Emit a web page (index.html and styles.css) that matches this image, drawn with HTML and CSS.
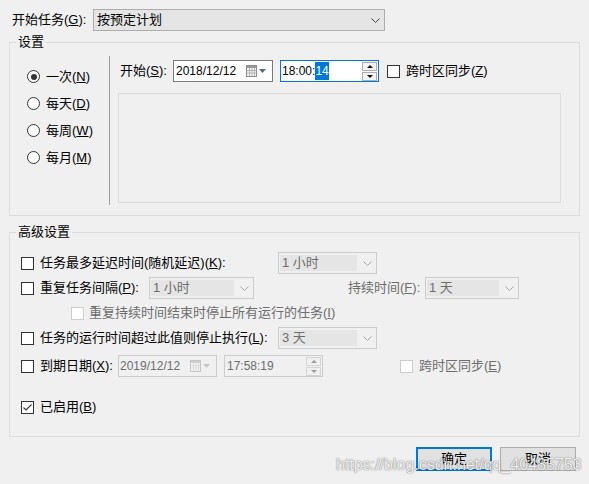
FILE: index.html
```html
<!DOCTYPE html>
<html lang="zh-CN">
<head>
<meta charset="utf-8">
<title>触发器</title>
<link rel="stylesheet" href="styles.css">
</head>
<body>
<div class="dialog">
  <div class="top-row">
    <span class="top-label">开始任务(<u>G</u>):</span>
    <div class="select">
      <span>按预定计划</span>
      <svg class="chev" width="9" height="5" viewBox="0 0 9 5"><polyline points="0.5,0.5 4.5,4.5 8.5,0.5" fill="none" stroke="#444" stroke-width="1"/></svg>
    </div>
  </div>

  <fieldset class="group settings">
    <legend>设置</legend>
    <div class="settings-body">
      <div class="radios">
        <div class="radio-row"><span class="radio checked"><span class="dot"></span></span><span>一次(<u>N</u>)</span></div>
        <div class="radio-row"><span class="radio"></span><span>每天(<u>D</u>)</span></div>
        <div class="radio-row"><span class="radio"></span><span>每周(<u>W</u>)</span></div>
        <div class="radio-row"><span class="radio"></span><span>每月(<u>M</u>)</span></div>
      </div>
      <div class="sep"></div>
      <div class="schedule">
        <div class="start-row">
          <span class="start-label">开始(<u>S</u>):</span>
          <div class="field date">
            <span class="num">2018/12/12</span>
            <svg width="21" height="12" viewBox="0 0 21 12"><rect x="0.5" y="0.5" width="10" height="11" fill="#f4f4f4" stroke="#8c8c8c"/><rect x="1" y="1" width="9" height="2" fill="#9a9a9a"/><path d="M1 5.5h9M1 8h9M3.5 3v8M6 3v8M8.5 3v8" stroke="#b4b4b4" stroke-width="1"/><path d="M13 4h7l-3.5 4z" fill="#50688c"/></svg>
          </div>
          <div class="field time">
            <span class="num">18:00:<span class="sel">14</span></span>
            <span class="spin"><span><i class="up"></i></span><span><i class="down"></i></span></span>
          </div>
          <span class="check start-check"></span>
          <span class="lbl">跨时区同步(<u>Z</u>)</span>
        </div>
        <div class="panel"></div>
      </div>
    </div>
  </fieldset>

  <fieldset class="group advanced">
    <legend>高级设置</legend>
    <div class="adv">
      <div class="adv-row first">
        <span class="check"></span>
        <span class="lbl w238">任务最多延迟时间(随机延迟)(<u>K</u>):</span>
        <div class="combo w99"><span class="val">1 小时</span><svg class="chev" width="9" height="5" viewBox="0 0 9 5"><polyline points="0.5,0.5 4.5,4.5 8.5,0.5" fill="none" stroke="#a6a6a6"/></svg></div>
      </div>
      <div class="adv-row">
        <span class="check"></span>
        <span class="lbl w109">重复任务间隔(<u>P</u>):</span>
        <div class="combo w105"><span class="val">1 小时</span><svg class="chev" width="9" height="5" viewBox="0 0 9 5"><polyline points="0.5,0.5 4.5,4.5 8.5,0.5" fill="none" stroke="#a6a6a6"/></svg></div>
        <span class="dur-label gray">持续时间(<u>F</u>):</span>
        <div class="combo w94"><span class="val">1 天</span><svg class="chev" width="9" height="5" viewBox="0 0 9 5"><polyline points="0.5,0.5 4.5,4.5 8.5,0.5" fill="none" stroke="#a6a6a6"/></svg></div>
      </div>
      <div class="adv-row">
        <span class="check disabled sub-check"></span>
        <span class="gray sub-lbl">重复持续时间结束时停止所有运行的任务(<u>I</u>)</span>
      </div>
      <div class="adv-row">
        <span class="check"></span>
        <span class="lbl w238">任务的运行时间超过此值则停止执行(<u>L</u>):</span>
        <div class="combo w99"><span class="val">3 天</span><svg class="chev" width="9" height="5" viewBox="0 0 9 5"><polyline points="0.5,0.5 4.5,4.5 8.5,0.5" fill="none" stroke="#a6a6a6"/></svg></div>
      </div>
      <div class="adv-row row5">
        <span class="check"></span>
        <span class="lbl w78">到期日期(<u>X</u>):</span>
        <div class="field date off">
          <span class="num">2019/12/12</span>
          <svg width="21" height="12" viewBox="0 0 21 12"><rect x="0.5" y="0.5" width="10" height="11" fill="#f6f6f6" stroke="#c4c4c4"/><rect x="1" y="1" width="9" height="2" fill="#cfcfcf"/><path d="M1 5.5h9M1 8h9M3.5 3v8M6 3v8M8.5 3v8" stroke="#dadada" stroke-width="1"/><path d="M13 4h7l-3.5 4z" fill="#c4c4c4"/></svg>
        </div>
        <div class="field time off">
          <span class="num">17:58:19</span>
          <span class="spin"><span><i class="up"></i></span><span><i class="down"></i></span></span>
        </div>
        <span class="check disabled tz-check"></span>
        <span class="lbl gray">跨时区同步(<u>E</u>)</span>
      </div>
      <div class="adv-row row6">
        <span class="check checked"><svg width="11" height="11" viewBox="0 0 11 11"><polyline points="1.5,5.5 4,8 9.5,2.5" fill="none" stroke="#333" stroke-width="1.1"/></svg></span>
        <span class="lbl">已启用(<u>B</u>)</span>
      </div>
    </div>
  </fieldset>

  <div class="buttons">
    <button class="btn default">确定</button>
    <button class="btn">取消</button>
  </div>

  <div class="watermark">https://blog.csdn.net/qq_40485753</div>
</div>
</body>
</html>
```

FILE: styles.css
```css
* { box-sizing: border-box; }

body {
  margin: 0;
  background: #f0f0f0;
  font-family: "Liberation Sans", "Noto Sans CJK SC", sans-serif;
  font-size: 13px;
  line-height: 16px;
  color: #000;
  white-space: nowrap;
}

.dialog {
  position: relative;
  width: 589px;
  height: 484px;
  overflow: hidden;
}

u { text-decoration: underline; text-underline-offset: 1px; }

.top-row {
  display: flex;
  align-items: center;
  padding: 9px 0 0 12px;
}
.top-label { width: 81px; }
.select {
  width: 292px;
  height: 22px;
  border: 1px solid #adadad;
  background: #e5e5e5;
  display: flex;
  align-items: center;
  justify-content: space-between;
  padding: 0 4px 0 3px;
}

.group {
  margin: 3px 9px 0;
  padding: 0;
  border: 1px solid #dcdcdc;
  min-width: 0;
}
.group legend {
  margin-left: 6px;
  padding: 0 2px;
  line-height: 16px;
}
.advanced { margin-top: 8px; }

.settings-body {
  display: flex;
  padding: 6px 0 10px;
}
.radios {
  width: 99px;
  padding: 7px 0 0 17px;
}
.radio-row {
  display: flex;
  align-items: center;
  height: 27px;
}
.radio {
  width: 13px;
  height: 13px;
  border: 1px solid #333;
  border-radius: 50%;
  background: #fff;
  margin-right: 6px;
  display: flex;
  align-items: center;
  justify-content: center;
}
.radio .dot {
  width: 6px;
  height: 6px;
  border-radius: 50%;
  background: #333;
}
.sep {
  width: 1px;
  height: 149px;
  background: #a0a0a0;
}
.schedule { padding-left: 8px; }
.start-row {
  display: flex;
  align-items: center;
  height: 22px;
  margin-top: 4px;
}
.start-label { width: 53px; margin-left: 2px; flex: none; }

.field {
  height: 22px;
  border: 1px solid #7a7a7a;
  background: #fff;
  display: flex;
  align-items: center;
  flex: none;
}
.num {
  font-family: "Liberation Sans", sans-serif;
  font-size: 12px;
}
.field.date {
  width: 100px;
  padding: 0 5px 0 2px;
  margin-right: 7px;
  justify-content: space-between;
}
.field.time {
  width: 99px;
  border-color: #0078d7;
  padding-left: 1px;
}
.sel {
  display: inline-block;
  background: #0078d7;
  color: #fff;
  line-height: 18px;
  height: 18px;
}
.spin {
  margin-left: auto;
  margin-right: 1px;
  width: 15px;
  height: 19px;
  display: flex;
  flex-direction: column;
  gap: 1px;
}
.spin > span {
  flex: 1;
  border: 1px solid #adadad;
  background: #f3f3f3;
  display: flex;
  align-items: center;
  justify-content: center;
}
.spin i {
  width: 0;
  height: 0;
  border-left: 3px solid transparent;
  border-right: 3px solid transparent;
}
.spin i.up { border-bottom: 3px solid #111; }
.spin i.down { border-top: 3px solid #111; }

.field.off {
  border-color: #cccccc;
  background: #f0f0f0;
  color: #6d6d6d;
}
.field.date.off { width: 99px; padding-left: 1px; }
.field.time.off { padding-left: 2px; }
.field.off .spin > span { border-color: #d4d4d4; background: #f0f0f0; }
.field.off .spin i.up { border-bottom-color: #9a9a9a; }
.field.off .spin i.down { border-top-color: #9a9a9a; }

.check {
  width: 13px;
  height: 13px;
  border: 1px solid #333;
  background: #fff;
  flex: none;
  display: flex;
  align-items: center;
  justify-content: center;
}
.check.disabled { border-color: #cccccc; }
.start-check { margin-left: 8px; }
.lbl { margin-left: 6px; }
.gray { color: #6d6d6d; }

.panel {
  width: 443px;
  height: 110px;
  border: 1px solid #dcdcdc;
  margin-top: 11px;
}

.adv { padding: 12px 0 18px 11px; }
.adv-row {
  display: flex;
  align-items: center;
  height: 22px;
  margin-top: 3px;
}
.adv-row.first { margin-top: 0; }
.adv-row.row5 { margin-top: 6px; }
.adv-row.row6 { margin-top: 19px; }

.w238 { width: 238px; flex: none; }
.w109 { width: 109px; flex: none; }
.w78 { width: 78px; flex: none; }

.combo {
  height: 22px;
  border: 1px solid #cccccc;
  background: #f0f0f0;
  color: #6d6d6d;
  display: flex;
  align-items: center;
  padding: 0 4px 0 1px;
  flex: none;
}
.combo .val {
  flex: 1;
  height: 16px;
  line-height: 16px;
  background: #e5e5e5;
  padding-left: 2px;
  margin-right: 6px;
}
.w99 { width: 99px; }
.w105 { width: 105px; }
.w94 { width: 94px; }
.dur-label { margin-left: 94px; width: 77px; flex: none; }

.sub-check { margin-left: 50px; }
.sub-lbl { margin-left: 5px; }
.tz-check { margin-left: 77px; }

.buttons {
  display: flex;
  justify-content: flex-end;
  gap: 8px;
  padding-right: 13px;
  margin-top: 10px;
}
.btn {
  width: 76px;
  height: 24px;
  border: 1px solid #adadad;
  background: #e1e1e1;
  font: inherit;
  color: #000;
  padding: 0;
  display: flex;
  align-items: center;
  justify-content: center;
}
.btn.default { border: 2px solid #0078d7; }

.watermark {
  position: absolute;
  left: 336px;
  top: 456px;
  font-family: "Liberation Sans", sans-serif;
  font-size: 16px;
  line-height: 18px;
  color: rgba(255, 255, 255, 0.92);
  text-shadow: 0 0 1px rgba(0, 0, 0, 0.55), 0 0 2px rgba(0, 0, 0, 0.25);
  pointer-events: none;
}
```
